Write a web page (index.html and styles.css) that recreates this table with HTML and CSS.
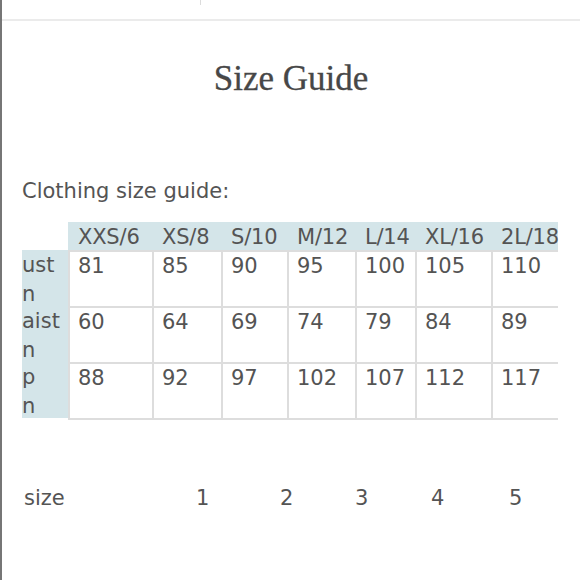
FILE: index.html
```html
<!DOCTYPE html>
<html lang="en">
<head>
<meta charset="utf-8">
<title>Size Guide</title>
<link rel="stylesheet" href="styles.css">
</head>
<body>
<div class="page">
  <div class="topbar"><span class="tick"></span></div>
  <h1 class="title">Size Guide</h1>
  <p class="intro">Clothing size guide:</p>
  <div class="chart">
    <div class="corner"></div>
    <div class="th">XXS/6</div>
    <div class="th">XS/8</div>
    <div class="th">S/10</div>
    <div class="th">M/12</div>
    <div class="th">L/14</div>
    <div class="th">XL/16</div>
    <div class="th">2L/18</div>

    <div class="rh"><span>ust</span><span>n</span></div>
    <div class="td">81</div>
    <div class="td">85</div>
    <div class="td">90</div>
    <div class="td">95</div>
    <div class="td">100</div>
    <div class="td">105</div>
    <div class="td">110</div>

    <div class="rh"><span>aist</span><span>n</span></div>
    <div class="td">60</div>
    <div class="td">64</div>
    <div class="td">69</div>
    <div class="td">74</div>
    <div class="td">79</div>
    <div class="td">84</div>
    <div class="td">89</div>

    <div class="rh last"><span>p</span><span>n</span></div>
    <div class="td last">88</div>
    <div class="td last">92</div>
    <div class="td last">97</div>
    <div class="td last">102</div>
    <div class="td last">107</div>
    <div class="td last">112</div>
    <div class="td last">117</div>
  </div>
  <div class="sizes">
    <span>size</span>
    <span>1</span>
    <span>2</span>
    <span>3</span>
    <span>4</span>
    <span>5</span>
  </div>
</div>
</body>
</html>
```

FILE: styles.css
```css
html, body {
  margin: 0;
  padding: 0;
  background: #ffffff;
}

body {
  font-family: "DejaVu Sans", sans-serif;
  color: #545454;
}

.page {
  box-sizing: border-box;
  height: 580px;
  overflow: hidden;
  border-left: 2px solid #767676;
}

.topbar {
  display: flex;
  height: 19px;
  border-bottom: 2px solid #ebebeb;
}

.tick {
  width: 1px;
  height: 5px;
  margin-left: 198px;
  background: #dcdcdc;
}

.title {
  margin: 36px 0 0;
  font-family: "Liberation Serif", serif;
  font-weight: normal;
  font-size: 35px;
  line-height: 44px;
  text-align: center;
  color: #474747;
  -webkit-text-stroke: 0.3px #474747;
}

.intro {
  margin: 78px 0 0;
  padding-left: 20px;
  font-size: 21px;
  line-height: 24px;
}

.chart {
  display: grid;
  grid-template-columns: 46px 84px 69px 66px 68px 60px 76px 67px;
  grid-template-rows: 28px 56px 56px 58px;
  margin: 19px 0 0 20px;
  width: 536px;
  font-size: 21px;
}

.corner {
  background: #ffffff;
}

.th {
  box-sizing: border-box;
  padding: 3px 0 0 10px;
  line-height: 25px;
  background: #d4e5e9;
  white-space: nowrap;
  letter-spacing: -0.2px;
}

.rh {
  display: flex;
  flex-direction: column;
  padding-top: 1px;
  line-height: 29px;
  background: #d4e5e9;
}

.rh.last {
  margin-bottom: 2px;
}

.td {
  box-sizing: border-box;
  padding-left: 8px;
  line-height: 28px;
  border-top: 2px solid #dddddd;
  border-left: 2px solid #dddddd;
  background: #ffffff;
}

.td.last {
  border-bottom: 2px solid #dddddd;
}

.sizes {
  display: grid;
  grid-template-columns: 172px 84px 75px 76px 78px auto;
  margin: 66px 0 0;
  padding-left: 22px;
  font-size: 21px;
  line-height: 24px;
}
```
